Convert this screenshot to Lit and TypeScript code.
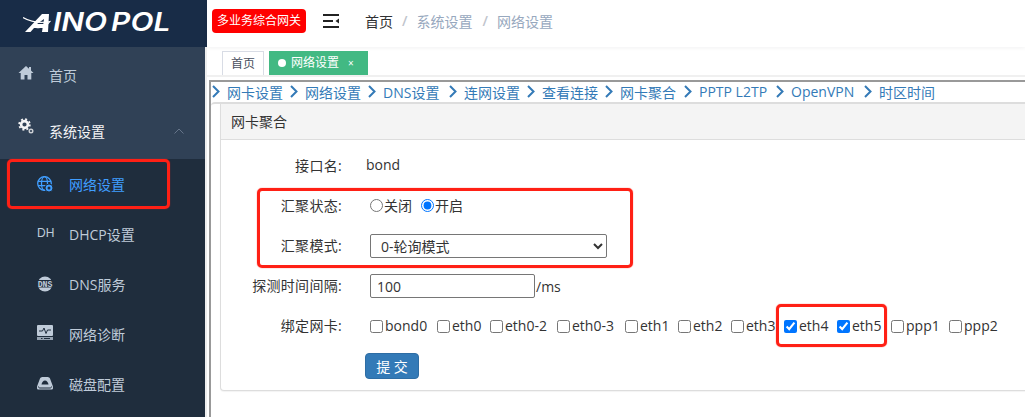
import { LitElement, html, css, svg } from "lit";
import { customElement } from "lit/decorators.js";

const icons: Record<string, unknown> = {
  home: svg`<path d="M8 1 .5 8h2.200v6.500h3.800V10h3v4.500h3.800V8h2.200L13 5.600V2h-2v1.700z" fill="currentColor"/>`,
  gear: svg`<g fill="none" stroke="currentColor"><circle cx="6.500" cy="6.500" r="3.400" stroke-width="2.600"/><circle cx="6.500" cy="6.500" r="5.300" stroke-width="1.800" stroke-dasharray="2 2.160"/><circle cx="13" cy="13" r="1.800" stroke-width="1.400" opacity=".8"/></g>`,
  globe: svg`<g fill="none" stroke="currentColor" stroke-width="1.300"><circle cx="7.500" cy="7.500" r="6.800"/><ellipse cx="7.500" cy="7.500" rx="3" ry="6.800"/><path d="M1 5.300h13M1 9.700h13"/></g><circle cx="12" cy="12" r="4" fill="currentColor" stroke="#1f2d3d"/><circle cx="12" cy="12" r="1.500" fill="#1f2d3d"/>`,
  dns: svg`<circle cx="8" cy="8" r="7.500" fill="currentColor"/><rect x="0" y="4" width="16" height="7.500" fill="#1f2d3d"/><text x="8" y="10.600" text-anchor="middle" font-family="'Liberation Mono',monospace" font-size="8.200" font-weight="700" fill="currentColor">DNS</text>`,
  pulse: svg`<rect x="0" y="0" width="16" height="11" rx="1" fill="currentColor"/><path d="M2 6h3.500l1.500-3 2 5.500L10.500 5H14" fill="none" stroke="#1f2d3d" stroke-width="1"/><path d="M0 12h16v3H0z" fill="currentColor" opacity=".75"/><path d="M4 13.500h1.500M7 13.500h6" stroke="#1f2d3d"/>`,
  disk: svg`<path d="M3 3.500C3.500 2.500 4.500 2 6 2h4c1.500 0 2.500.5 3 1.500l2.600 7c.3.700.4 1 .4 1.700v.8c0 1-.7 1.500-1.500 1.500h-13C.7 14.500 0 14 0 13v-.8c0-.7.100-1 .4-1.700z" fill="currentColor"/><path d="M4.500 9.500c.3-2.300 1.800-4 3.500-4s3.200 1.700 3.500 4z" fill="#1f2d3d"/><path d="M1.500 11.500c0 1 .5 1.500 1.500 1.500h10c1 0 1.500-.5 1.500-1.500" fill="none" stroke="#1f2d3d"/>`,
};

const icon = (name: string, cls = "") =>
  html`<svg class="ico ${cls}" viewBox="0 0 16 16" aria-hidden="true">${icons[name]}</svg>`;

const navLinks: [string, number][] = [
  ["网卡设置", 56],
  ["网络设置", 56],
  ["DNS设置", 59],
  ["连网设置", 56],
  ["查看连接", 56],
  ["网卡聚合", 57],
  ["PPTP L2TP", 70],
  ["OpenVPN", 66],
  ["时区时间", 56],
];

const nics: [string, boolean, number][] = [
  ["bond0", false, 67],
  ["eth0", false, 53],
  ["eth0-2", false, 67],
  ["eth0-3", false, 68],
  ["eth1", false, 53],
  ["eth2", false, 53],
  ["eth3", false, 53],
  ["eth4", true, 53],
  ["eth5", true, 54],
  ["ppp1", false, 58],
  ["ppp2", false, 60],
];

@customElement("app-root")
export class AppRoot extends LitElement {
  static styles = css`
    :host {
      display: block;
      position: relative;
      width: 1025px;
      height: 417px;
      overflow: hidden;
      background: #fff;
      font-family: "Open Sans", "Noto Sans CJK SC", sans-serif;
      font-size: 14px;
      color: #333;
    }
    .app { display: flex; height: 417px; }
    aside { width: 207px; flex: none; display: flex; flex-direction: column; }
    .logo {
      height: 47px;
      flex: none;
      background: #182c47;
      display: flex;
      align-items: center;
      padding: 0 0 3px 23px;
      color: #fff;
      box-sizing: border-box;
    }
    .logo-a { width: 28px; height: 19px; flex: none; margin-right: 2px; }
    .logo-text {
      font-family: "Inter", sans-serif;
      font-weight: 600;
      font-style: italic;
      font-size: 25px;
      line-height: 24px;
      word-spacing: -3px;
      transform: scaleX(1.2);
      transform-origin: left center;
      white-space: nowrap;
    }
    .menu {
      flex: 1;
      min-height: 0;
      overflow: hidden;
      width: 205px;
      border-right: 2px solid #eee;
      background: #304156;
      color: #bfcbd9;
    }
    .row { display: flex; align-items: center; height: 56px; padding-left: 18px; }
    .row .ico { margin-right: 15px; }
    .row.top .ico { width: 16px; height: 16px; margin-top: -4px; }
    .row.open { color: #f4f4f5; }
    .row.open .ico { margin-top: -10px; }
    .arrow { width: 10px; height: 6px; margin-left: auto; margin-right: 21px; color: #66758a; }
    .sub { background: #1f2d3d; height: 400px; }
    .sub-row { display: flex; align-items: center; height: 50px; padding-left: 37px; }
    .sub-row .ico { width: 16px; height: 16px; margin-right: 16px; flex: none; }
    .sub-row .ico.up { margin-top: -2px; }
    .sub-row.active { color: #409eff; }
    .dh {
      width: 16px;
      margin-right: 16px;
      margin-top: -3px;
      font-family: "Liberation Sans", sans-serif;
      font-size: 12px;
      color: #bfcbd9;
      flex: none;
    }
    main { flex: 1; min-width: 0; display: flex; flex-direction: column; }
    .topbar {
      height: 47px;
      flex: none;
      display: flex;
      align-items: center;
      padding-left: 5px;
      box-shadow: 0 1px 4px rgba(0, 21, 41, 0.06);
    }
    .badge {
      width: 94px;
      height: 24px;
      margin-top: -5px;
      background: #f00;
      color: #fff;
      border-radius: 4px;
      font-size: 12px;
      line-height: 24px;
      text-align: center;
      flex: none;
    }
    .burger { width: 16px; height: 14px; margin: -5px 0 0 17px; flex: none; color: #222; }
    .crumbs { display: flex; margin: -6px 0 0 26px; color: #97a8be; }
    .crumbs .first { color: #303133; }
    .crumbs .sep { color: #c0c4cc; margin: 0 9px; font-weight: 600; }
    .crumbs .sep.wide { margin: 0 9px 0 10px; }
    .tags {
      height: 30px;
      flex: none;
      box-sizing: border-box;
      padding: 4px 0 0 15px;
      display: flex;
      gap: 5px;
      border-bottom: 2px solid #f0f0f0;
      font-size: 12px;
    }
    .tag {
      height: 24px;
      line-height: 24px;
      box-sizing: border-box;
      display: flex;
      align-items: center;
    }
    .tag.plain { width: 42px; justify-content: center; border: 1px solid #d8dce5; border-bottom: 0; color: #495060; line-height: 22px; }
    .tag.on { width: 99px; background: #42b983; color: #fff; padding-left: 9px; }
    .dot { width: 8px; height: 8px; border-radius: 50%; background: #fff; margin-right: 5px; }
    .x { margin-left: 9px; font-size: 10px; }
    .frame {
      flex: 1;
      min-height: 0;
      margin: 3px 0 0 2px;
      border-top: 2px solid #999;
      border-left: 2px solid #999;
      display: flex;
      flex-direction: column;
    }
    .nav {
      height: 20px;
      box-sizing: border-box;
      padding: 0 0 1px 1px;
      flex: none;
      display: flex;
      align-items: center;
      gap: 7px;
      color: #337ab7;
      white-space: nowrap;
    }
    .chev { width: 8px; height: 13px; flex: none; }
    .nav span { flex: none; }
    .wrap {
      flex: 1;
      min-height: 0;
      border-top: 2px solid #ddd;
      border-top-left-radius: 4px;
      padding-left: 9px;
    }
    .panel {
      width: 900px;
      height: 287px;
      box-sizing: border-box;
      border: 1px solid #ddd;
      border-top: 0;
      border-radius: 0 0 4px 4px;
      background: #fff;
      box-shadow: 0 1px 1px rgba(0, 0, 0, 0.05);
    }
    .panel-head {
      height: 36px;
      box-sizing: border-box;
      background: #f4f4f4;
      border-bottom: 1px solid #ddd;
      padding-left: 10px;
      line-height: 36px;
      color: #333;
    }
    .body { padding-top: 6px; }
    .f { display: flex; align-items: center; height: 40px; }
    label.l { width: 121px; margin-right: 28px; text-align: right; flex: none; padding-bottom: 3px; letter-spacing: 0.3px; }
    .val-bond { margin-left: -4px; padding-bottom: 3px; }
    .opt { display: inline-flex; align-items: center; padding-bottom: 2px; }
    .opt input { margin: 0 1px 0 0; width: 13px; height: 13px; }
    .radio-gap { margin-left: 9px; }
    select {
      width: 237px;
      height: 24px;
      box-sizing: border-box;
      border: 1px solid #767676;
      border-radius: 2px;
      background: #fff;
      padding-left: 6px;
      font: inherit;
      color: #333;
    }
    .input {
      width: 165px;
      height: 24px;
      box-sizing: border-box;
      border: 1px solid #767676;
      border-radius: 2px;
      padding: 0 6px;
      font: inherit;
      color: #333;
    }
    .unit { margin-left: 1px; }
    .nic { display: inline-flex; align-items: center; flex: none; white-space: nowrap; }
    .nic input { margin: 1px 2px 0 0; width: 13px; height: 13px; }
    .nics { display: flex; margin-top: -1px; }
    .submit {
      display: block;
      margin: 7px 0 0 144px;
      width: 54px;
      height: 26px;
      padding: 0;
      box-sizing: border-box;
      background: #337ab7;
      border: 1px solid #2e6da4;
      border-radius: 4px;
      color: #fff;
      font: inherit;
    }
    .mark {
      position: absolute;
      box-sizing: border-box;
      border: 3px solid #ff2015;
      border-radius: 5px;
      box-shadow: 0 0 1px #ff2015;
      pointer-events: none;
    }
    .m1 { left: 7px; top: 159px; width: 163px; height: 50px; }
    .m2 { left: 257px; top: 188px; width: 376px; height: 80px; }
    .m3 { left: 776px; top: 304px; width: 111px; height: 43px; }
  `;

  render() {
    return html`
      <div class="app">
        <aside>
          <div class="logo">
            <svg class="logo-a" viewBox="0 0 28 19" aria-hidden="true">
              <path d="M2 19 19 1h7l-1 18h-6l.6-4H11l-3.500 4z" fill="#fff"/>
              <path d="M14 11h6.300l.7-5z" fill="#182c47"/>
              <path d="M0 4.500c7 4 17 6 27 4-3 4-8 7-14 6" fill="none" stroke="#fff" stroke-width="1.100"/>
            </svg>
            <span class="logo-text">INO POL</span>
          </div>
          <nav class="menu">
            <div class="row top">${icon("home")}<span>首页</span></div>
            <div class="row top open">
              ${icon("gear")}<span>系统设置</span>
              <svg class="arrow" viewBox="0 0 10 6" aria-hidden="true"><path d="M.5 5.500 5 1l4.500 4.500" fill="none" stroke="currentColor"/></svg>
            </div>
            <div class="sub">
              <div class="sub-row active">${icon("globe")}<span>网络设置</span></div>
              <div class="sub-row"><span class="dh">DH</span><span>DHCP设置</span></div>
              <div class="sub-row">${icon("dns")}<span>DNS服务</span></div>
              <div class="sub-row">${icon("pulse", "up")}<span>网络诊断</span></div>
              <div class="sub-row">${icon("disk", "up")}<span>磁盘配置</span></div>
            </div>
          </nav>
        </aside>
        <main>
          <div class="topbar">
            <div class="badge">多业务综合网关</div>
            <svg class="burger" viewBox="0 0 16 14" aria-hidden="true">
              <path d="M0 1h16M0 7h10M0 13h16" stroke="currentColor" stroke-width="2"/>
              <path d="M16 4.500v5L12.500 7z" fill="currentColor"/>
            </svg>
            <div class="crumbs">
              <span class="first">首页</span><span class="sep">/</span><span>系统设置</span><span class="sep wide">/</span><span>网络设置</span>
            </div>
          </div>
          <div class="tags">
            <div class="tag plain">首页</div>
            <div class="tag on"><span class="dot"></span>网络设置<span class="x">×</span></div>
          </div>
          <div class="frame">
            <div class="nav">
              ${navLinks.map(
                ([n, w]) => html`<svg class="chev" viewBox="0 0 8 13" aria-hidden="true"><path d="M1 1l5.500 5.500L1 12" fill="none" stroke="currentColor" stroke-width="2"/></svg><span style="width:${w}px">${n}</span>`
              )}
            </div>
            <div class="wrap">
              <section class="panel">
                <div class="panel-head">网卡聚合</div>
                <div class="body">
                  <div class="f"><label class="l">接口名:</label><span class="val-bond">bond</span></div>
                  <div class="f">
                    <label class="l">汇聚状态:</label>
                    <label class="opt"><input type="radio" name="s" />关闭</label>
                    <label class="opt radio-gap"><input type="radio" name="s" checked />开启</label>
                  </div>
                  <div class="f">
                    <label class="l">汇聚模式:</label>
                    <select><option>0-轮询模式</option></select>
                  </div>
                  <div class="f">
                    <label class="l">探测时间间隔:</label>
                    <input class="input" value="100" /><span class="unit">/ms</span>
                  </div>
                  <div class="f">
                    <label class="l">绑定网卡:</label>
                    <div class="nics">
                      ${nics.map(
                        ([n, c, w]) => html`<label class="nic" style="width:${w}px"><input type="checkbox" ?checked=${c} />${n}</label>`
                      )}
                    </div>
                  </div>
                  <button class="submit">提 交</button>
                </div>
              </section>
            </div>
          </div>
        </main>
      </div>
      <div class="mark m1"></div>
      <div class="mark m2"></div>
      <div class="mark m3"></div>
    `;
  }
}
